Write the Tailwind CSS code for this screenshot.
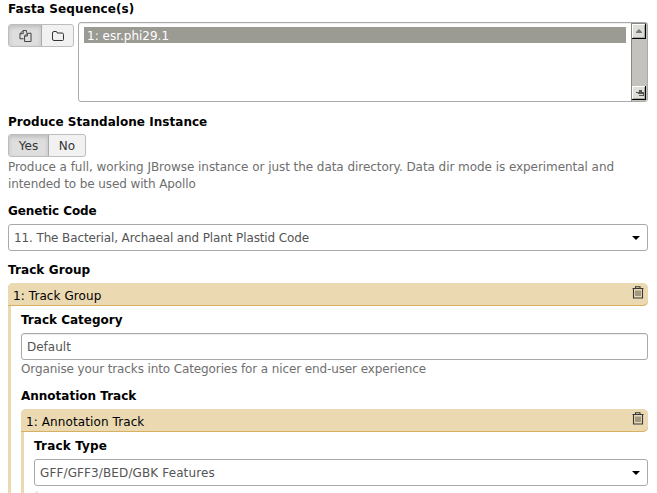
<!DOCTYPE html>
<html lang="en">
<head>
<meta charset="utf-8">
<title>JBrowse</title>
<script src="https://cdn.jsdelivr.net/npm/@tailwindcss/browser@4"></script>
</head>
<body class="h-[493px] overflow-hidden bg-white font-['DejaVu_Sans',sans-serif] text-[12px] leading-[17px] text-black">
<svg class="hidden">
  <symbol id="trash" viewBox="0 0 12 13"><path d="M.5 2.500h11M3.500 2V.7h4.500V2M1.500 2.500v9.500h9V2.500" fill="none" stroke="#35383a" stroke-width="1.1"/><path d="M4 4.500v5.500M6 4.500v5.500M8 4.500v5.500" fill="none" stroke="#35383a" stroke-width=".8"/></symbol>
</svg>
<main class="h-[493px] overflow-hidden pl-2 pr-[9px]">
  <section>
    <h2 class="h-[22px] font-bold leading-[19px] tracking-[0.1px]">Fasta Sequence(s)</h2>
    <div class="flex h-20 gap-1">
      <div class="mt-[2px] flex h-[23px] w-[66px] overflow-hidden rounded-[3px] border border-[#bdbdbd] bg-[#f1f1f1]">
        <button class="flex w-[33px] items-center justify-center rounded-l-[2px] border-r border-[#aaa] bg-[#dedede] shadow-[inset_0_2px_4px_#00000026]">
          <svg width="13" height="12" viewBox="0 0 13 13" fill="none" stroke="#333" stroke-width="1"><path d="M4.500 9.500H.5V4L4 .5h3.500V3M4 .5V4H.5M8.500 3.500h4v9h-7V6.500l3-3v3h-3"/></svg>
        </button>
        <button class="flex flex-1 items-center justify-center">
          <svg class="-mr-px mt-px" width="12" height="11" viewBox="0 0 12 11" fill="none" stroke="#333"><path d="M.5 2q0-1.500 1.500-1.500h2q1 0 1 1v.5h5q1.500 0 1.500 1.500v5q0 1-1 1H2Q.5 9.500.5 8z"/></svg>
        </button>
      </div>
      <div class="flex flex-1 rounded-[3px] border border-[#aaa] pl-[5px] shadow-[inset_0_1px_1px_#00000013]">
        <div class="mt-1 h-4 flex-1 bg-[#9b9a93] pl-[3px] leading-[18px] text-white">1: esr.phi29.1</div>
        <div class="ml-[5px] flex w-4 flex-col justify-between border-l border-t border-[#888780] bg-[#c3c2bc]">
          <div class="flex h-[15px] w-[14px] items-center justify-center border-b border-r border-black bg-[#dfded9] shadow-[inset_1px_1px_#fff,inset_-1px_-1px_#aaa9a3]"><svg width="6" height="4"><path d="M0 4V3L3 0l3 3v1z" fill="#777"/></svg></div>
          <div class="mb-[1px] flex h-[14px] w-[14px] items-center justify-center border-b border-r border-black bg-[#dfded9] shadow-[inset_1px_1px_#fff,inset_-1px_-1px_#aaa9a3]"><svg class="ml-[2px]" width="8" height="6"><path d="M0 2h7v1H0zM3 0h3v2H3zM2 3h5v1H2zM3 5h5v1H3zM7 2h1v4H7z" fill="#555"/></svg></div>
        </div>
      </div>
    </div>
  </section>
  <section class="pt-[11px]">
    <h2 class="h-[21px] font-bold leading-[19px] tracking-[0.04px]">Produce Standalone Instance</h2>
    <div class="flex h-[23px] w-[78px] overflow-hidden rounded-[3px] border border-[#bdbdbd] bg-[#f1f1f1] leading-[19px] text-[#333]">
      <button class="w-10 border-r border-[#aaa] bg-[#dedede] pt-[2px] shadow-[inset_0_2px_4px_#00000026]">Yes</button>
      <button class="flex-1 pt-[2px]">No</button>
    </div>
    <p class="h-[35px] whitespace-nowrap pt-[2px] tracking-[-0.055px] text-[#6f6f6f]">Produce a full, working JBrowse instance or just the data directory. Data dir mode is experimental and<br><span class="tracking-[-0.1px]">intended to be used with Apollo</span></p>
  </section>
  <section class="pt-[10px]">
    <h2 class="h-[22px] font-bold leading-[19px] tracking-[-0.08px]">Genetic Code</h2>
    <div class="flex h-[27px] items-center justify-between rounded-[3px] border border-[#aaa] pl-[5px] pr-[7px] text-[#555]"><span class="pt-[2px] tracking-[-0.12px]">11. The Bacterial, Archaeal and Plant Plastid Code</span><svg width="8" height="4"><path d="M0 0h8L4 4z" fill="#000"/></svg></div>
  </section>
  <section class="pt-[10px]">
    <h2 class="h-[22px] font-bold leading-[19px] tracking-[0.09px]">Track Group</h2>
    <div class="h-[300px] rounded-tl-[5px] border-l-[3px] border-[#ebd9b2]">
      <div class="-ml-[3px] flex h-[23px] justify-between rounded-r-[5px] rounded-tl-[5px] bg-[#ebd9b2] pl-[5px] pr-1 leading-[27px] shadow-[inset_0_-1px_#d6b161]"><span class="tracking-[0.08px]">1: Track Group</span><svg class="mt-[3px]" width="12" height="13"><use href="#trash"/></svg></div>
      <div class="pl-[10px] pt-[5px]">
        <h2 class="h-[22px] font-bold leading-[19px]">Track Category</h2>
        <div class="h-[27px] rounded-[3px] border border-[#aaa] pl-[5px] leading-[27px] text-[#555] shadow-[inset_0_1px_1px_#00000013]">Default</div>
        <p class="pt-px tracking-[-0.115px] text-[#6f6f6f]">Organise your tracks into Categories for a nicer end-user experience</p>
        <h2 class="mt-[9px] h-[22px] font-bold leading-[19px]">Annotation Track</h2>
        <div class="h-[100px] rounded-tl-[5px] border-l-[3px] border-[#ebd9b2]">
          <div class="-ml-[3px] flex h-[23px] justify-between rounded-r-[5px] rounded-tl-[5px] bg-[#ebd9b2] pl-[5px] pr-1 leading-[27px] shadow-[inset_0_-1px_#d6b161]"><span class="tracking-[0.1px]">1: Annotation Track</span><svg class="mt-[3px]" width="12" height="13"><use href="#trash"/></svg></div>
          <div class="pl-[10px] pt-[5px]">
            <h2 class="h-[22px] font-bold leading-[19px] tracking-[0.17px]">Track Type</h2>
            <div class="flex h-[27px] items-center justify-between rounded-[3px] border border-[#aaa] pl-[5px] pr-[7px] text-[#555]"><span class="pt-[2px] tracking-[0.12px]">GFF/GFF3/BED/GBK Features</span><svg width="8" height="4"><path d="M0 0h8L4 4z" fill="#000"/></svg></div>
            <div class="mt-[5px] h-5 w-5 rounded-tl-[5px] border-l-[3px] border-[#ebd9b2]"></div>
          </div>
        </div>
      </div>
    </div>
  </section>
</main>
</body>
</html>
